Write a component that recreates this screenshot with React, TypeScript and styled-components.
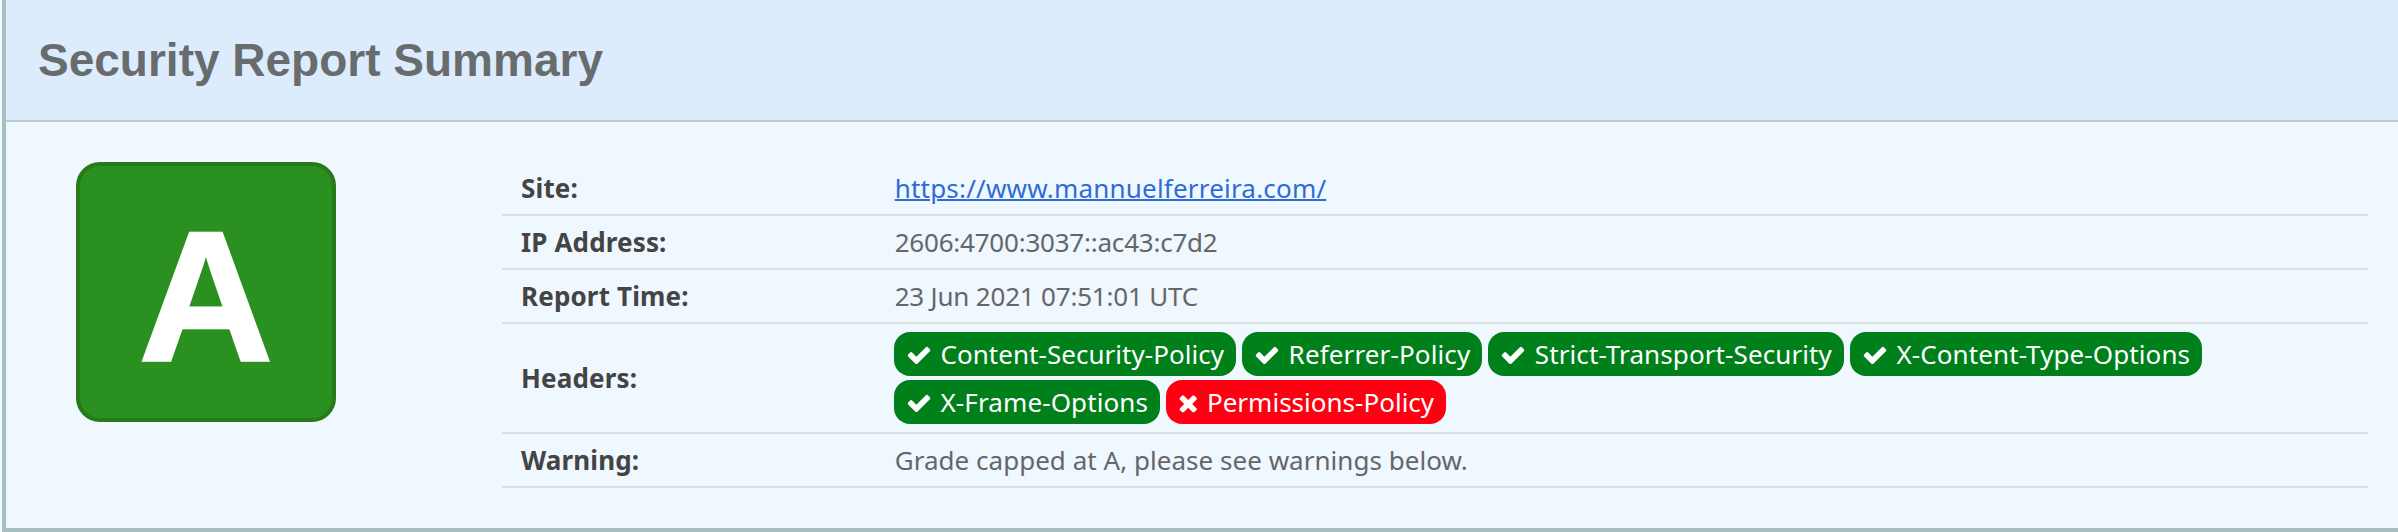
import React from "react";
import styled, { createGlobalStyle } from "styled-components";

const GlobalStyle = createGlobalStyle`
  *, *::before, *::after { box-sizing: border-box; }
  body {
    margin: 0;
    background: #f5faff;
    color: #666;
    font: 26px/1.4 "Noto Sans", "Open Sans", sans-serif;
    overflow: hidden;
  }
`;

const Panel = styled.section`
  height: 532px;
  margin-left: 2px;
  display: flex;
  flex-direction: column;
  border: solid #a8bfc2;
  border-width: 0 0 4px 4px;
  background: #eff7ff;
`;

const PanelHeader = styled.header`
  height: 122px;
  flex: none;
  padding: 0 32px;
  display: flex;
  align-items: center;
  border-bottom: 2px solid #bccdcc;
  background: #dcecfd;
`;

const Title = styled.h2`
  margin: 0;
  color: #696c6f;
  font: bold 46px/52px "Liberation Sans", Arial, sans-serif;
  white-space: nowrap;
`;

const PanelBody = styled.div`
  flex: 1;
  display: flex;
  align-items: flex-start;
  padding: 40px 30px 0 70px;
`;

const Grade = styled.div`
  width: 260px;
  height: 260px;
  flex: none;
  display: flex;
  align-items: center;
  justify-content: center;
  padding-top: 10px;
  margin-right: 166px;
  border: 4px solid #267a17;
  border-radius: 24px;
  background: #2a9121;
  color: #fff;
  font: bold 186px/1 "Liberation Sans", Arial, sans-serif;
  -webkit-text-stroke: 2.5px #fff;
`;

const Details = styled.dl`
  flex: 1;
  margin: 0;
`;

const Row = styled.div<{ $tall?: boolean }>`
  height: ${(p) => (p.$tall ? 110 : 54)}px;
  display: flex;
  align-items: center;
  border-bottom: 2px solid #dedede;
`;

const Label = styled.dt`
  width: 392px;
  flex: none;
  padding-left: 19px;
  color: #444;
  font-weight: bold;
  letter-spacing: 0.15px;
`;

const Value = styled.dd`
  margin: 0;
  white-space: nowrap;
`;

const TextValue = styled(Value)<{ $tracking: number }>`
  padding-left: 0.7px;
  letter-spacing: ${(p) => p.$tracking}px;
`;

const SiteLink = styled.a`
  color: #2f6bd6;
  text-decoration: underline;
  text-decoration-thickness: 2px;
`;

const BadgeList = styled.ul`
  width: 1460px;
  margin: 0;
  padding: 0;
  display: flex;
  flex-wrap: wrap;
  gap: 4px 6px;
  list-style: none;
`;

const Badge = styled.li<{ $ok: boolean; $tracking: number }>`
  height: 44px;
  display: flex;
  align-items: center;
  gap: 8.5px;
  padding: 0 12px;
  border-radius: 16px;
  background: ${(p) => (p.$ok ? "#00801a" : "#ff0012")};
  color: #fff;
  letter-spacing: ${(p) => p.$tracking}px;
`;

const Icon = styled.svg`
  height: 26px;
  margin-top: 2px;
  flex: none;
  fill: currentColor;
`;

const CheckIcon = () => (
  <Icon viewBox="0 0 1792 1792" width="26">
    <path d="M1671 566q0 40-28 68l-724 724-136 136q-28 28-68 28t-68-28l-136-136-362-362q-28-28-28-68t28-68l136-136q28-28 68-28t68 28l294 295 656-657q28-28 68-28t68 28l136 136q28 28 28 68z" />
  </Icon>
);

const TimesIcon = () => (
  <Icon viewBox="192 0 1408 1792" width="20.4">
    <path d="M1490 1322q0 40-28 68l-136 136q-28 28-68 28t-68-28l-294-294-294 294q-28 28-68 28t-68-28l-136-136q-28-28-28-68t28-68l294-294-294-294q-28-28-28-68t28-68l136-136q28-28 68-28t68 28l294 294 294-294q28-28 68-28t68 28l136 136q28 28 28 68t-28 68l-294 294 294 294q28 28 28 68z" />
  </Icon>
);

const headers = [
  { name: "Content-Security-Policy", ok: true, tracking: 0.04 },
  { name: "Referrer-Policy", ok: true, tracking: 0.13 },
  { name: "Strict-Transport-Security", ok: true, tracking: 0.1 },
  { name: "X-Content-Type-Options", ok: true, tracking: 0.1 },
  { name: "X-Frame-Options", ok: true, tracking: 0.11 },
  { name: "Permissions-Policy", ok: false, tracking: 0.01 },
];

export default function App() {
  return (
    <>
      <GlobalStyle />
      <Panel>
        <PanelHeader>
          <Title>Security Report Summary</Title>
        </PanelHeader>
        <PanelBody>
          <Grade>A</Grade>
          <Details>
            <Row>
              <Label>Site:</Label>
              <TextValue $tracking={0.2}>
                <SiteLink href="#">https://www.mannuelferreira.com/</SiteLink>
              </TextValue>
            </Row>
            <Row>
              <Label>IP Address:</Label>
              <TextValue $tracking={-0.22}>2606:4700:3037::ac43:c7d2</TextValue>
            </Row>
            <Row>
              <Label>Report Time:</Label>
              <TextValue $tracking={-0.2}>23 Jun 2021 07:51:01 UTC</TextValue>
            </Row>
            <Row $tall>
              <Label>Headers:</Label>
              <Value>
                <BadgeList>
                  {headers.map((h) => (
                    <Badge key={h.name} $ok={h.ok} $tracking={h.tracking}>
                      {h.ok ? <CheckIcon /> : <TimesIcon />}
                      {h.name}
                    </Badge>
                  ))}
                </BadgeList>
              </Value>
            </Row>
            <Row>
              <Label>Warning:</Label>
              <TextValue $tracking={0.03}>Grade capped at A, please see warnings below.</TextValue>
            </Row>
          </Details>
        </PanelBody>
      </Panel>
    </>
  );
}
